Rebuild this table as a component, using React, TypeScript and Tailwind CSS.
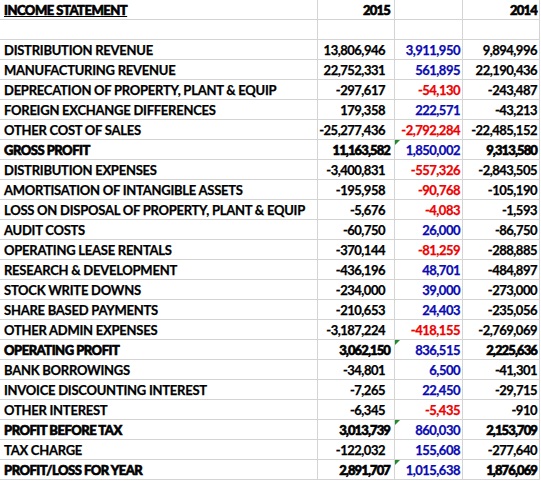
const BLUE = 'text-[#0a0ab4]'
const RED = 'text-[#ee0000]'

type Row = {
  label: string
  a: string
  b: string
  c: string
  tone?: 'blue' | 'red'
  heavy?: boolean
}

const rows: Row[] = [
  { label: 'DISTRIBUTION REVENUE', a: '13,806,946', b: '3,911,950', c: '9,894,996', tone: 'blue' },
  { label: 'MANUFACTURING REVENUE', a: '22,752,331', b: '561,895', c: '22,190,436', tone: 'blue' },
  { label: 'DEPRECATION OF PROPERTY, PLANT & EQUIP', a: '-297,617', b: '-54,130', c: '-243,487', tone: 'red' },
  { label: 'FOREIGN EXCHANGE DIFFERENCES', a: '179,358', b: '222,571', c: '-43,213', tone: 'blue' },
  { label: 'OTHER COST OF SALES', a: '-25,277,436', b: '-2,792,284', c: '-22,485,152', tone: 'red' },
  { label: 'GROSS PROFIT', a: '11,163,582', b: '1,850,002', c: '9,313,580', tone: 'blue', heavy: true },
  { label: 'DISTRIBUTION EXPENSES', a: '-3,400,831', b: '-557,326', c: '-2,843,505', tone: 'red' },
  { label: 'AMORTISATION OF INTANGIBLE ASSETS', a: '-195,958', b: '-90,768', c: '-105,190', tone: 'red' },
  { label: 'LOSS ON DISPOSAL OF PROPERTY, PLANT & EQUIP', a: '-5,676', b: '-4,083', c: '-1,593', tone: 'red' },
  { label: 'AUDIT COSTS', a: '-60,750', b: '26,000', c: '-86,750', tone: 'blue' },
  { label: 'OPERATING LEASE RENTALS', a: '-370,144', b: '-81,259', c: '-288,885', tone: 'red' },
  { label: 'RESEARCH & DEVELOPMENT', a: '-436,196', b: '48,701', c: '-484,897', tone: 'blue' },
  { label: 'STOCK WRITE DOWNS', a: '-234,000', b: '39,000', c: '-273,000', tone: 'blue' },
  { label: 'SHARE BASED PAYMENTS', a: '-210,653', b: '24,403', c: '-235,056', tone: 'blue' },
  { label: 'OTHER ADMIN EXPENSES', a: '-3,187,224', b: '-418,155', c: '-2,769,069', tone: 'red' },
  { label: 'OPERATING PROFIT', a: '3,062,150', b: '836,515', c: '2,225,636', tone: 'blue', heavy: true },
  { label: 'BANK BORROWINGS', a: '-34,801', b: '6,500', c: '-41,301', tone: 'blue' },
  { label: 'INVOICE DISCOUNTING INTEREST', a: '-7,265', b: '22,450', c: '-29,715', tone: 'blue' },
  { label: 'OTHER INTEREST', a: '-6,345', b: '-5,435', c: '-910', tone: 'red' },
  { label: 'PROFIT BEFORE TAX', a: '3,013,739', b: '860,030', c: '2,153,709', tone: 'blue', heavy: true },
  { label: 'TAX CHARGE', a: '-122,032', b: '155,608', c: '-277,640', tone: 'blue' },
  { label: 'PROFIT/LOSS FOR YEAR', a: '2,891,707', b: '1,015,638', c: '1,876,069', tone: 'blue', heavy: true },
]

const cell = 'h-5 border-r border-b border-[#d4d4d4] flex items-end pb-[2px] whitespace-nowrap overflow-hidden leading-none'
const thick = '[-webkit-text-stroke:0.6px_currentColor]'
const thin = '[-webkit-text-stroke:0.25px_currentColor]'

export default function App() {
  return (
    <div className="w-[541px] h-[482px] bg-white text-black font-['Lato',sans-serif] text-[13px] font-bold">
      <div className="grid grid-cols-[318px_77px_68px_77px]">
        {/* header */}
        <div className={`${cell} pl-1 font-black underline tracking-[-0.5px] ${thick}`}>INCOME STATEMENT</div>
        <div className={`${cell} justify-end pr-[4px] font-black tracking-[-0.8px] ${thick}`}>2015</div>
        <div className={cell}></div>
        <div className={`${cell} justify-end pr-[2px] font-black tracking-[-0.8px] ${thick}`}>2014</div>

        <div className={cell}></div>
        <div className={cell}></div>
        <div className={cell}></div>
        <div className={cell}></div>

        {rows.map((r) => (
          <Line key={r.label} row={r} />
        ))}
      </div>
    </div>
  )
}

function Line({ row }: { row: Row }) {
  const num = row.heavy ? `font-black tracking-[-0.9px] ${thick}` : `tracking-[-0.5px] ${thin}`
  return (
    <>
      <div className={`${cell} pl-1 ${row.heavy ? `font-black tracking-[-0.5px] ${thick}` : `tracking-[-0.25px] ${thin}`}`}>
        {row.label}
      </div>
      <div className={`${cell} justify-end ${row.heavy ? 'pr-[4px]' : 'pr-[9px]'} ${num}`}>{row.a}</div>
      <div className={`${cell} relative justify-end pr-[2px] tracking-[-0.5px] ${thin} ${row.tone === 'red' ? RED : BLUE}`}>
        {row.heavy && (
          <span className="absolute left-0 top-0 w-0 h-0 border-t-[5px] border-r-[5px] border-t-[#1e8a2e] border-r-transparent" />
        )}
        {row.b}
      </div>
      <div className={`${cell} justify-end pr-[2px] ${num}`}>{row.c}</div>
    </>
  )
}
